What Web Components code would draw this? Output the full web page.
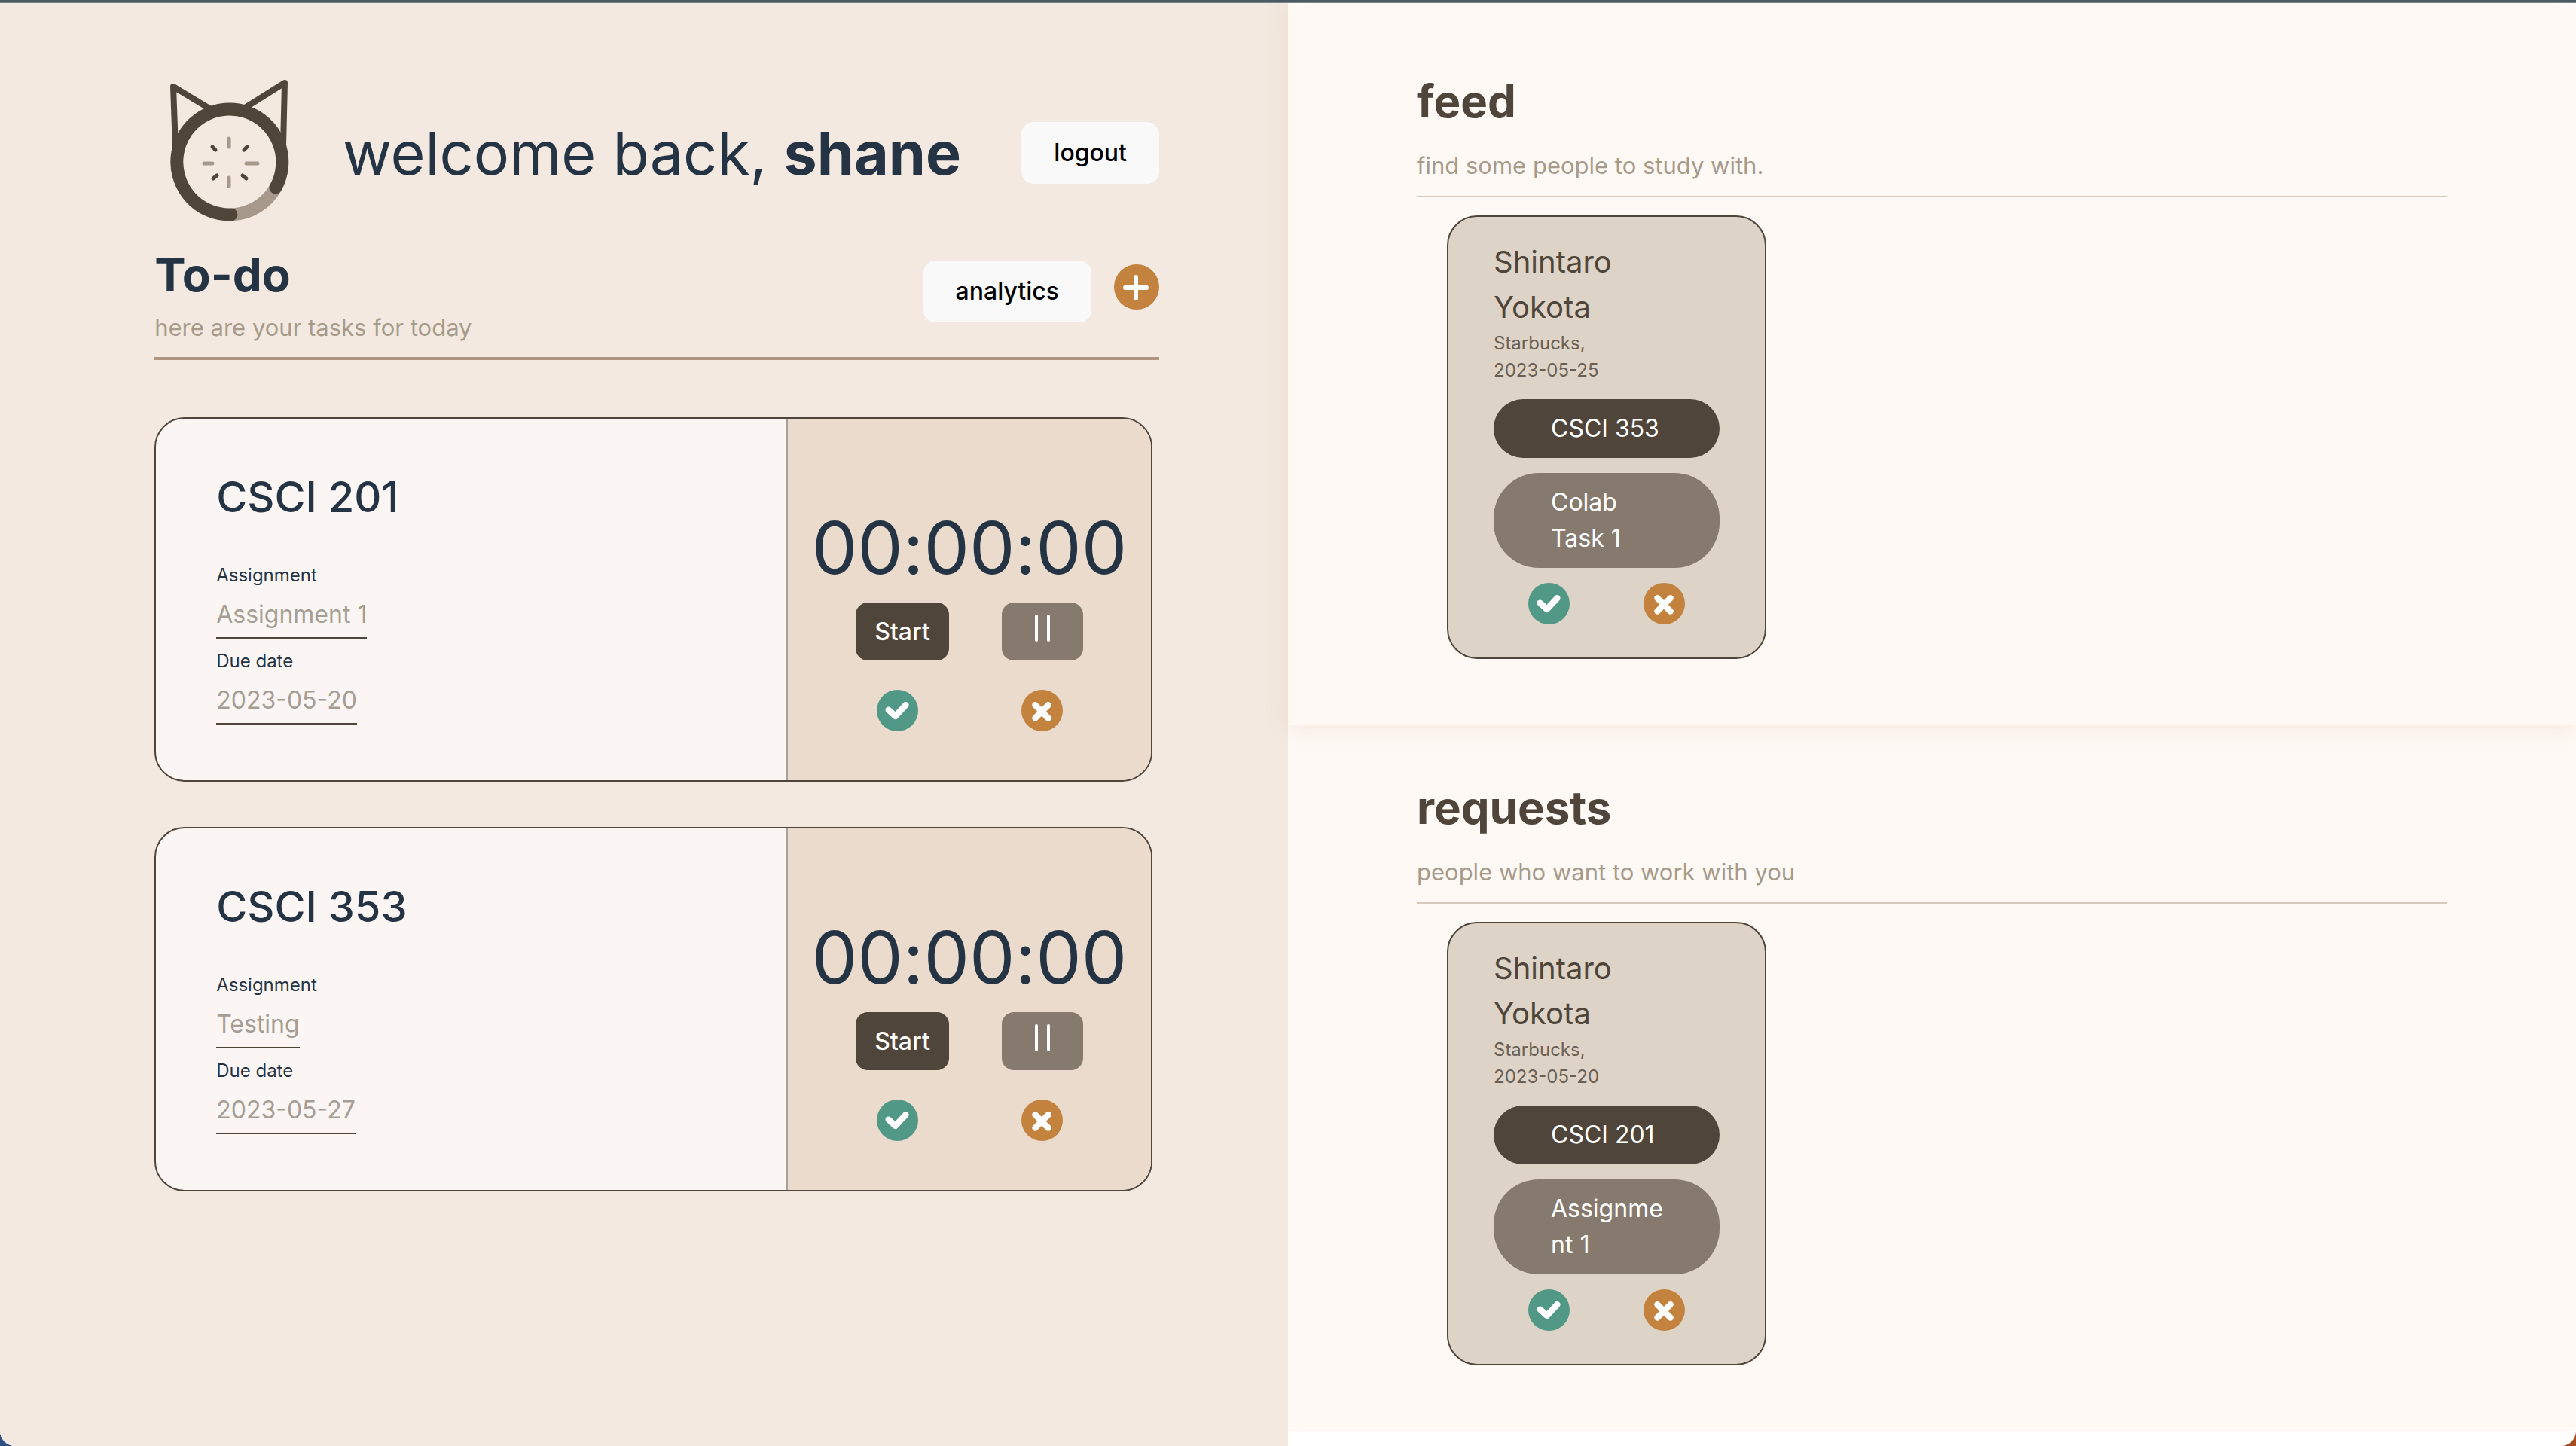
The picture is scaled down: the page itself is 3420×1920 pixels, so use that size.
<!DOCTYPE html>
<html lang="en">
<head>
<meta charset="utf-8">
<title>Study dashboard</title>
<style>
html { background: linear-gradient(90deg, #2f4f82 50%, #a64b22 50%); }
body { margin: 0; font-family: Inter, "Liberation Sans", sans-serif; color: #253444; }
</style>
</head>
<body>
<study-app></study-app>
<script>
const define = (name, html) => {
  const t = document.createElement('template');
  t.innerHTML = html;
  customElements.define(name, class extends HTMLElement {
    constructor() {
      super();
      this.attachShadow({ mode: 'open' }).append(t.content.cloneNode(true));
    }
  });
};

define('cat-logo', `
<style>:host{display:block} svg{display:block;width:194px;height:194px}</style>
<svg viewBox="0 -1 194 194" fill="none" stroke-linecap="round" stroke-linejoin="round" aria-label="Cat timer logo" role="img">
  <path d="M28 90 L25 8 L73 37 M171 86 L173 3 L122 35" stroke="#4f453a" stroke-width="8"/>
  <path d="M102 178 A70 70 0 0 0 161 142" stroke="#a6998c" stroke-width="17" stroke-linecap="butt"/>
  <path d="M161 142 A70 70 0 1 0 102 178" stroke="#4f453a" stroke-width="17"/>
  <g stroke-width="5">
    <path d="M99 77V88M99 129V140M66 110H77M122 110H137" stroke="#a6998c"/>
    <path d="M77 88L81 92M123 88L119 92M78 130L83 126M117 126L122 130" stroke="#4f453a"/>
  </g>
</svg>`);

define('soft-button', `
<style>
:host{display:block}
button{display:block;height:82px;padding:0 43px;border:0;border-radius:16px;background:#f9f9f9;color:#000;font:500 32px/48px Inter,sans-serif}
</style><button type="button"><slot></slot></button>`);

const roundIcon = (name, label, color, size, path) => define(name, `
<style>
:host{display:block}
button{display:block;padding:0;border:0;background:none}
svg{display:block;width:${size}px;height:${size}px}
</style>
<button type="button" aria-label="${label}"><svg viewBox="0 0 60 60"><circle cx="30" cy="30" r="30" fill="${color}"/>${path}</svg></button>`);
roundIcon('add-button', 'Add task', '#c3823e', 60, '<path d="M29 17V45M15 31H43" stroke="#fff" stroke-width="6" stroke-linecap="round"/>');
roundIcon('accept-button', 'Accept', '#519886', 55, '<path d="M17 29L27 38L42 22" fill="none" stroke="#fff" stroke-width="9" stroke-linecap="round" stroke-linejoin="round"/>');
roundIcon('dismiss-button', 'Dismiss', '#c3823e', 55, '<path d="M20 22L39 41M39 22L20 41" stroke="#fff" stroke-width="9" stroke-linecap="round"/>');

define('task-card', `
<style>
:host{display:flex;box-sizing:border-box;height:484px;border:2px solid #4f453a;border-radius:40px;overflow:hidden;background:#fbf6f3}
.info{flex:1;padding:66px 80px 0;min-width:0}
h3{margin:0 0 48px;font:500 56px/76px Inter,sans-serif}
dl{margin:0}
dt{font-size:24px;line-height:36px}
dd{margin:0 0 12px;width:fit-content;height:66px;box-sizing:border-box;padding-top:10px;border-bottom:2px solid #4f453a;color:#a69e95;font-size:32px;line-height:48px}
.timer{box-sizing:border-box;width:484px;border-left:2px solid #a89f96;background:#eadbcc;padding-top:111px;display:flex;flex-direction:column;align-items:center}
time{font-size:96px;line-height:120px;font-variant-ligatures:no-contextual}
.row{display:flex;margin-top:13px;gap:70px}
.row button{height:77px;border:0;border-radius:16px;color:#fff;font:500 32px/48px Inter,sans-serif}
.start{background:#4f453a;padding:0;width:124px}
.pause{background:#867a6e;width:108px;padding:16px 44px 25px}
.pause svg{display:block;width:20px;height:36px}
.done{display:flex;gap:137px;margin-top:39px}
</style>
<div class="info"><h3><slot name="course"></slot></h3>
<dl><dt>Assignment</dt><dd><slot name="assignment"></slot></dd>
<dt>Due date</dt><dd><slot name="due"></slot></dd></dl></div>
<div class="timer"><time>00:00:00</time>
<div class="row"><button type="button" class="start">Start</button><button type="button" class="pause" aria-label="Pause"><svg viewBox="0 0 20 36"><path d="M2 2V34M18 2V34" stroke="#fff" stroke-width="4" stroke-linecap="round"/></svg></button></div>
<div class="done"><accept-button></accept-button><dismiss-button></dismiss-button></div></div>`);

define('peer-card', `
<style>
:host{display:block;box-sizing:border-box;width:424px;height:589px;border:2px solid #4f453a;border-radius:40px;background:#ddd3c6;padding:30px 60px 0}
h3{margin:0;max-width:240px;color:#4f453a;font:400 40px/60px Inter,sans-serif}
.meta{margin:0 0 20px;max-width:240px;color:#695f54;font-size:24px;line-height:36px}
.meta ::slotted(time){white-space:nowrap}
.pill{margin:0 0 20px;padding:15px 64px 15px 76px;border-radius:60px;background:#4f453a;color:#fff;font-size:32px;line-height:48px;overflow-wrap:anywhere}
.pill.task{background:#867a6e}
.row{display:flex;justify-content:center;gap:98px}
</style>
<h3><slot name="name"></slot></h3><p class="meta"><slot name="place"></slot>, <slot name="date"></slot></p>
<p class="pill"><slot name="course"></slot></p><p class="pill task"><slot name="task"></slot></p>
<div class="row"><accept-button></accept-button><dismiss-button></dismiss-button></div>`);

define('people-section', `
<style>
:host{display:block;box-sizing:border-box;height:938px;padding:68px 10% 0;background:#fef9f5}
header{border-bottom:2px solid #d8c8bb;padding-bottom:18px;margin-bottom:24px}
h2{margin:0;color:#4f453a;font:700 60px/84px Inter,sans-serif}
p{margin:22px 0 0;color:#a69b8b;font-size:31px;line-height:44px}
.list{padding-left:40px}
</style>
<header><h2><slot name="title"></slot></h2><p><slot name="subtitle"></slot></p></header>
<div class="list"><slot></slot></div>`);

define('study-app', `
<style>
:host{display:grid;grid-template-columns:1fr 1fr;box-sizing:border-box;min-height:100vh;padding-top:4px;border-radius:0 0 20px 20px;overflow:hidden;background:linear-gradient(#4a5964 0 2px,#75848b 2px 4px,#fff 4px)}
main{background:#f3e9e0;padding:97px 10% 0 12%}
.hello{display:flex;align-items:center;height:204px}
h1{margin:0 0 0 56px;flex:1;font:400 79px/100px Inter,sans-serif;white-space:nowrap}
.todo{display:flex;justify-content:space-between;height:173px;box-sizing:border-box;border-bottom:4px solid #b09580}
h2{margin:16px 0 0;font:700 62px/88px Inter,sans-serif}
.todo p{margin:4px 0 0;color:#a69b8b;font-size:31px;line-height:44px}
.actions{display:flex;gap:30px;padding-top:41px}
add-button{padding-top:5px}
.tasks{display:grid;gap:60px;margin:76px 9px 0 0}
.feed{position:relative;height:958px;padding-top:88px;box-shadow:0 4px 28px rgba(200,150,120,.18)}
</style>
<main>
<div class="hello"><cat-logo></cat-logo><h1>welcome back, <b>shane</b></h1><soft-button>logout</soft-button></div>
<div class="todo"><div><h2>To-do</h2><p>here are your tasks for today</p></div><div class="actions"><soft-button>analytics</soft-button><add-button></add-button></div></div>
<div class="tasks">
<task-card><span slot="course">CSCI 201</span><span slot="assignment">Assignment 1</span><span slot="due">2023-05-20</span></task-card>
<task-card><span slot="course">CSCI 353</span><span slot="assignment">Testing</span><span slot="due">2023-05-27</span></task-card>
</div>
</main>
<aside>
<people-section class="feed"><span slot="title">feed</span><span slot="subtitle">find some people to study with.</span>
<peer-card><span slot="name">Shintaro Yokota</span><span slot="place">Starbucks</span><time slot="date">2023-05-25</time><span slot="course">CSCI 353</span><span slot="task">Colab Task 1</span></peer-card></people-section>
<people-section><span slot="title">requests</span><span slot="subtitle">people who want to work with you</span>
<peer-card><span slot="name">Shintaro Yokota</span><span slot="place">Starbucks</span><time slot="date">2023-05-20</time><span slot="course">CSCI 201</span><span slot="task">Assignment 1</span></peer-card></people-section>
</aside>`);
</script>
</body>
</html>
